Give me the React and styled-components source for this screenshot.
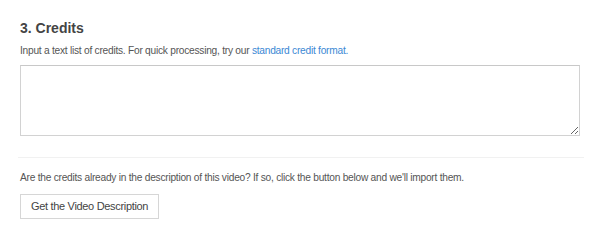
import React from "react";
import styled, { createGlobalStyle } from "styled-components";

const GlobalStyle = createGlobalStyle`
  html, body { margin: 0; padding: 0; background: #ffffff; }
  body { font-family: "Liberation Sans", Arial, sans-serif; }
`;

const Section = styled.section`
  padding: 20px 20px 0 20px;
  display: flex;
  flex-direction: column;
  align-items: flex-start;
`;

const Heading = styled.h3`
  margin: 0;
  font-size: 14px;
  line-height: 17px;
  font-weight: bold;
  color: #444444;
`;

const Text = styled.p`
  margin: ${(p) => p.$margin || "0"};
  font-size: 10.2px;
  line-height: 14px;
  letter-spacing: -0.25px;
  color: #555555;
`;

const Link = styled.a`
  color: #3b88d4;
  text-decoration: none;
`;

const TextArea = styled.textarea`
  box-sizing: border-box;
  display: block;
  width: 100%;
  height: 71px;
  margin: 7px 0 0 0;
  padding: 4px;
  border: 1px solid #d2d2d2;
  border-top-color: #c8c8c8;
  border-radius: 0;
  background: #ffffff;
  font-family: "Liberation Sans", Arial, sans-serif;
  font-size: 11px;
  outline: none;
`;

const Divider = styled.hr`
  align-self: stretch;
  margin: 21px -4px 0 -2px;
  border: 0;
  border-top: 1px solid #f1f1f1;
  height: 0;
`;

const Button = styled.button`
  box-sizing: border-box;
  margin-top: 9px;
  height: 25px;
  padding: 0 10px;
  border: 1px solid #d6d6d6;
  border-radius: 0;
  background: #ffffff;
  color: #444444;
  font-family: "Liberation Sans", Arial, sans-serif;
  font-size: 11px;
  line-height: 15px;
  letter-spacing: -0.32px;
  cursor: pointer;
`;

export default function App() {
  return (
    <>
      <GlobalStyle />
      <Section>
        <Heading>3. Credits</Heading>
        <Text $margin="7px 0 0 0">
          Input a text list of credits. For quick processing, try our{" "}
          <Link href="#">standard credit format.</Link>
        </Text>
        <TextArea />
        <Divider />
        <Text $margin="13px 0 0 0">
          Are the credits already in the description of this video? If so, click the button below and we'll import them.
        </Text>
        <Button type="button">Get the Video Description</Button>
      </Section>
    </>
  );
}
